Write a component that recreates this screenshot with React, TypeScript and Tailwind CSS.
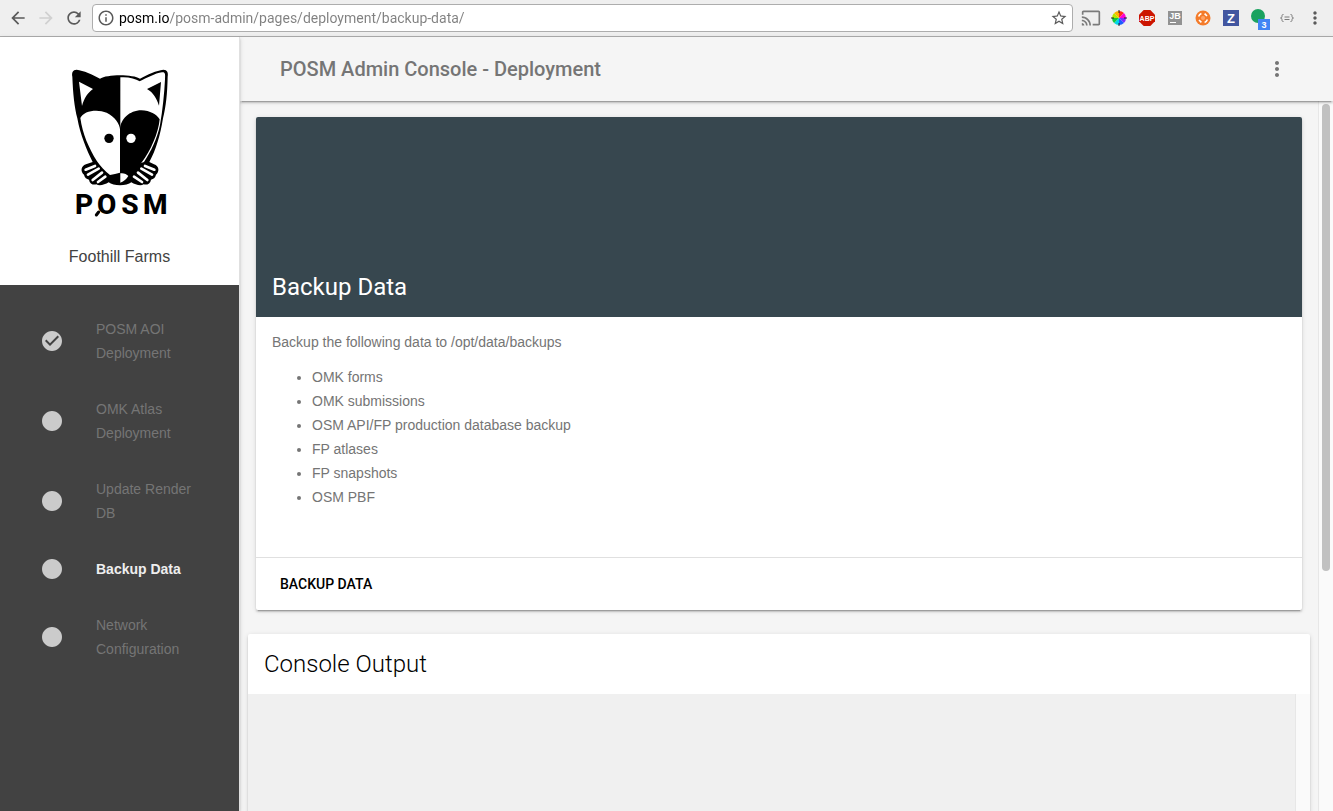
import React from 'react';
import {
  MdArrowBack,
  MdArrowForward,
  MdCast,
  MdCheckCircle,
  MdInfoOutline,
  MdLens,
  MdMoreVert,
  MdRefresh,
  MdStarBorder,
} from 'react-icons/md';

interface Step {
  label: string;
  done?: boolean;
  active?: boolean;
}

const steps: Step[] = [
  { label: 'POSM AOI Deployment', done: true },
  { label: 'OMK Atlas Deployment' },
  { label: 'Update Render DB' },
  { label: 'Backup Data', active: true },
  { label: 'Network Configuration' },
];

const backups = [
  'OMK forms',
  'OMK submissions',
  'OSM API/FP production database backup',
  'FP atlases',
  'FP snapshots',
  'OSM PBF',
];

const wheel = ['#ff2a1a', '#ff00d4', '#7a2bff', '#1a5cff', '#00d5e8', '#12c93c', '#b6e800', '#ffb300'];

const ColorWheelIcon = () => (
  <svg viewBox="0 0 16 16" className="h-4 w-4">
    {wheel.map((color, i) => (
      <path key={color} d="M8 8L8 1A7 7 0 0 1 12.95 3.05Z" fill={color} transform={`rotate(${i * 45} 8 8)`} />
    ))}
    <path d="M8 0v3M8 13v3M0 8h3M13 8h3" stroke="#222" strokeWidth="1" />
  </svg>
);

const AdblockIcon = () => (
  <svg viewBox="0 0 16 16" className="h-4 w-4">
    <path d="M4.7 0h6.6L16 4.7v6.6L11.3 16H4.7L0 11.3V4.7Z" fill="#cc1400" />
    <text x="8" y="11" textAnchor="middle" fontSize="7" fontWeight="700" fill="#fff" fontFamily="Liberation Sans, sans-serif">
      ABP
    </text>
  </svg>
);

const JetBrainsIcon = () => (
  <svg viewBox="0 0 16 16" className="h-4 w-4">
    <path d="M1 1h14v14H1z" fill="#929292" />
    <text x="8" y="9" textAnchor="middle" fontSize="9" fontWeight="700" fill="#fff" fontFamily="Liberation Sans, sans-serif">
      JB
    </text>
    <path d="M3 12.5h6" stroke="#fff" />
  </svg>
);

const BuoyIcon = () => (
  <svg viewBox="0 0 16 16" className="h-4 w-4">
    <circle cx="8" cy="8" r="7.5" fill="#f47b2a" />
    <g fill="none" stroke="#fff" strokeWidth="1.6">
      <path d="M3.6 6.4A4.700 4.700 0 0 1 6.4 3.600M9.600 3.600L12 6M12.400 9.600A4.700 4.700 0 0 1 9.600 12.400M4 10L6.400 12.400" />
    </g>
    <circle cx="8" cy="8" r="2" fill="#ffa366" />
  </svg>
);

const ZIcon = () => (
  <svg viewBox="0 0 16 16" className="h-4 w-4">
    <path d="M0 0h16v16H0z" fill="#4256a0" />
    <text x="8" y="13" textAnchor="middle" fontSize="13" fontWeight="700" fill="#fff" fontFamily="Liberation Sans, sans-serif">
      Z
    </text>
  </svg>
);

const BadgeIcon = () => (
  <svg viewBox="0 0 22 24" className="h-6 w-[22px]">
    <circle cx="10" cy="10" r="7" fill="#1aa260" />
    <path d="M10 13h12v11H10z" fill="#4285f4" />
    <text x="16" y="22" textAnchor="middle" fontSize="9" fontWeight="700" fill="#fff" fontFamily="Liberation Sans, sans-serif">
      3
    </text>
  </svg>
);

const BracesIcon = () => (
  <svg viewBox="0 0 16 16" className="h-4 w-4" fill="none" stroke="#7a7a7a">
    <path d="M4.5 4.5C3 4.5 3 5 3 6.2S2.500 8 1.500 8c1 0 1.500.6 1.500 1.800S3 11.500 4.500 11.500M11.500 4.500c1.500 0 1.500.5 1.500 1.700S13.500 8 14.500 8c-1 0-1.500.6-1.500 1.800s0 1.700-1.500 1.700M5.500 7h5M5.500 9.500h5" />
  </svg>
);

const extensions = [
  { name: 'Cast', icon: <MdCast className="h-5 w-5 text-[#7b7b7b]" /> },
  { name: 'Color picker', icon: <ColorWheelIcon /> },
  { name: 'Adblock Plus', icon: <AdblockIcon /> },
  { name: 'JetBrains', icon: <JetBrainsIcon /> },
  { name: 'Buoy', icon: <BuoyIcon /> },
  { name: 'Zotero', icon: <ZIcon /> },
  { name: 'Notifications', icon: <BadgeIcon /> },
  { name: 'JSON', icon: <BracesIcon /> },
  { name: 'Browser menu', icon: <MdMoreVert className="h-5 w-5 text-[#5a5a5a]" /> },
];

const BrowserBar: React.FC = () => (
  <div className="flex h-[37px] shrink-0 items-center border-b border-[#adadad] bg-[#efefef] pr-1">
    <div className="flex w-[92px] items-center gap-2 pl-2 text-[#5a5a5a]">
      <button aria-label="Back">
        <MdArrowBack className="h-5 w-5" />
      </button>
      <button aria-label="Forward" className="text-[#d0d0d0]">
        <MdArrowForward className="h-5 w-5" />
      </button>
      <button aria-label="Reload">
        <MdRefresh className="h-5 w-5" />
      </button>
    </div>
    <div className="flex h-7 flex-1 items-center rounded-[4px] border border-[#adadad] bg-white px-1">
      <MdInfoOutline className="h-[18px] w-[18px] text-[#5a5a5a]" />
      <input
        type="text"
        aria-label="Address"
        defaultValue="posm.io/posm-admin/pages/deployment/backup-data/"
        className="ml-1 flex-1 bg-[linear-gradient(to_right,#000_50px,#808080_50px)] bg-clip-text font-[Roboto,sans-serif] text-sm text-transparent caret-black outline-none"
      />
      <button aria-label="Bookmark this page">
        <MdStarBorder className="h-[18px] w-[18px] text-[#5a5a5a]" />
      </button>
    </div>
    <div className="ml-1 flex items-center">
      {extensions.map(({ name, icon }) => (
        <button key={name} aria-label={name} className="flex w-7 items-center justify-center">
          {icon}
        </button>
      ))}
    </div>
  </div>
);

const PosmLogo: React.FC = () => (
  <svg viewBox="0 0 360 495" className="h-[165px] w-[120px]" role="img" aria-label="POSM">
    {/* Head */}
    <path d="M50 29C38 29 35 38 37 50C39 100 43 140 52 175C61 225 80 270 98 306L78 313C62 318 61 336 72 344C74 353 80 357 87 359C89 371 99 376 109 373C118 380 134 374 146 367C160 379 200 379 214 367C226 374 242 380 251 373C261 376 271 371 273 359C280 357 286 353 288 344C299 336 298 318 282 313L268 306C288 270 301 225 309 175C318 140 322 100 323 50C325 38 322 29 310 29C290 31 262 44 240 56C220 42 140 42 120 56C98 44 70 31 50 29Z" />
    <path d="M181 52C205 50 226 56 239 64C260 54 285 40 306 37C316 36 316 42 315 58C313 100 308 150 300 195C292 235 272 276 252 306L181 330Z" fill="#fff" />
    <path d="M180 207C182 178 208 151 244 151C270 152 290 163 299 178C295 220 272 272 246 306C232 324 216 336 204 345L180 338Z" />
    <path d="M61 174C70 152 112 146 140 158C166 171 179 192 180 208L180 338C170 340 160 343 150 345C136 334 120 318 111 304C86 262 68 224 61 174Z" fill="#fff" />
    <path d="M57 65L99 87C83 98 72 116 66 138Z" fill="#fff" />
    <path d="M261 87L303 66L297 137C290 115 280 98 261 87Z" />
    <path d="M181 340C190 338 200 342 205 348C199 358 192 364 181 368Z" fill="#fff" />
    <circle cx="147" cy="235" r="14" />
    <circle cx="213" cy="235" r="14" fill="#fff" />
    {/* Paws */}
    <g fill="none" stroke="#fff" strokeWidth="8" strokeLinecap="round">
      <path d="M77 329L105 318M84 344L116 326M98 360L126 338M114 366L136 350" />
      <path d="M255 318L283 329M244 326L276 344M234 338L262 360M222 350L246 366" />
    </g>
    {/* Wordmark */}
    <text x="45 111 184 249" y="462" fontSize="84" fontWeight="800" fontFamily="Roboto, sans-serif">
      POSM
    </text>
    <path d="M116 456L109 465" stroke="#000" strokeWidth="9" strokeLinecap="round" />
  </svg>
);

const Drawer: React.FC = () => (
  <aside className="z-20 flex w-60 shrink-0 flex-col border-r border-[#e0e0e0] bg-[#424242] shadow-[0_2px_2px_0_rgba(0,0,0,0.14),0_3px_1px_-2px_rgba(0,0,0,0.2),0_1px_5px_0_rgba(0,0,0,0.12)]">
    <div className="flex flex-col items-center bg-white pt-[23px] pb-4">
      <PosmLogo />
      <span className="mt-5 text-base text-[#424242]">Foothill Farms</span>
    </div>
    <nav className="flex flex-col py-4">
      {steps.map((step) => (
        <a key={step.label} href="#" className="flex items-center py-4 pr-10 pl-10 text-sm leading-6">
          {step.done ? (
            <MdCheckCircle className="h-6 w-6 shrink-0 text-[#cbcbcb]" />
          ) : (
            <MdLens className="h-6 w-6 shrink-0 text-[#cbcbcb]" />
          )}
          <span className={step.active ? 'ml-8 font-bold text-[#eeeeee]' : 'ml-8 text-[#757575]'}>{step.label}</span>
        </a>
      ))}
    </nav>
  </aside>
);

const BackupCard: React.FC = () => (
  <section className="mx-4 mt-4 rounded-[2px] bg-white shadow-[0_2px_2px_0_rgba(0,0,0,0.14),0_3px_1px_-2px_rgba(0,0,0,0.2),0_1px_5px_0_rgba(0,0,0,0.12)]">
    <div className="flex h-[200px] items-end rounded-t-[2px] bg-[#37474f] p-4">
      <h2 className="font-[Roboto,sans-serif] text-2xl leading-7 text-white">Backup Data</h2>
    </div>
    <div className="px-4 pt-4 pb-12 text-sm text-[#757575]">
      <p className="leading-[18px]">Backup the following data to /opt/data/backups</p>
      <ul className="mt-[14px] list-disc pl-10 leading-6">
        {backups.map((item) => (
          <li key={item}>{item}</li>
        ))}
      </ul>
    </div>
    <div className="border-t border-[#e0e0e0] p-2">
      <button className="h-9 px-4 font-[Roboto,sans-serif] text-sm font-medium text-black uppercase">Backup Data</button>
    </div>
  </section>
);

const ConsoleCard: React.FC = () => (
  <section className="mx-2 mt-6 flex flex-1 flex-col rounded-[2px] bg-white shadow-[0_2px_2px_0_rgba(0,0,0,0.14),0_3px_1px_-2px_rgba(0,0,0,0.2),0_1px_5px_0_rgba(0,0,0,0.12)]">
    <h2 className="px-4 py-[14px] font-[Roboto,sans-serif] text-2xl font-light text-black">Console Output</h2>
    <div className="flex min-h-[240px] flex-1 bg-[#f0f0f0]">
      <div className="flex-1" />
      <div className="w-[15px] border-l border-[#e7e7e7] bg-[#fafafa]" />
    </div>
  </section>
);

const App: React.FC = () => (
  <div className="flex h-screen flex-col overflow-hidden font-['Liberation_Sans',sans-serif]">
    <BrowserBar />
    <div className="flex min-h-0 flex-1">
      <Drawer />
      <div className="flex min-w-0 flex-1 flex-col bg-[#f5f5f5]">
        <header className="z-10 flex h-16 shrink-0 items-center justify-between bg-[#f5f5f5] px-10 text-[#757575] shadow-[0_2px_2px_0_rgba(0,0,0,0.14),0_3px_1px_-2px_rgba(0,0,0,0.2),0_1px_5px_0_rgba(0,0,0,0.12)]">
          <h1 className="font-[Roboto,sans-serif] text-xl font-medium">POSM Admin Console - Deployment</h1>
          <button aria-label="More options" className="flex h-8 w-8 items-center justify-center">
            <MdMoreVert className="h-6 w-6" />
          </button>
        </header>
        <div className="flex min-h-0 flex-1">
          <main className="flex min-w-0 flex-1 flex-col overflow-hidden">
            <BackupCard />
            <ConsoleCard />
          </main>
          {/* Scroll track */}
          <div className="w-[15px] shrink-0 border-l border-[#e7e7e7] bg-[#fafafa] px-[3px] pt-[3px]">
            <div className="h-[66%] rounded-full bg-[#c1c1c1]" />
          </div>
        </div>
      </div>
    </div>
  </div>
);

export default App;
